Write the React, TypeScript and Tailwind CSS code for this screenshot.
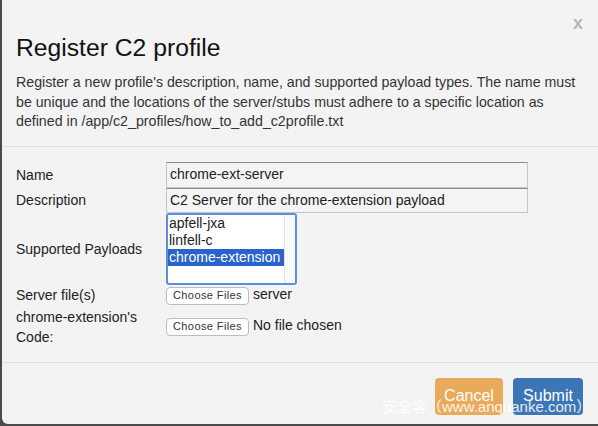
import React from "react";

export default function App() {
  const font = { fontFamily: '"Liberation Sans", Arial, "Noto Sans CJK SC", sans-serif' };
  return (
    <div className="relative w-[598px] h-[426px] bg-[#4a4a4a] overflow-hidden" style={font}>
      <div className="ml-[2px] h-[424px] bg-[#f3f3f3] rounded-bl-[6px] flex flex-col text-[#222]">
        {/* header */}
        <div className="pt-[14px] pl-[14px] pr-[15px] pb-[14px] border-b border-[#dedede]">
          <div className="flex justify-end h-[22px]">
            <span className="text-[18px] leading-[18px] font-bold text-[#b8b8b8]">x</span>
          </div>
          <h1 className="text-[24.7px] leading-[24px] text-[#111]">Register C2 profile</h1>
          <p className="mt-[13px] text-[14.2px] leading-[19.5px] text-[#333] whitespace-nowrap">
            Register a new profile's description, name, and supported payload types. The name must
            <br />
            be unique and the locations of the server/stubs must adhere to a specific location as
            <br />
            defined in /app/c2_profiles/how_to_add_c2profile.txt
          </p>
        </div>
        {/* body */}
        <div className="pt-[15px] pb-[15px] pl-[14px] border-b border-[#dedede] flex flex-col text-[14px]">
          <div className="flex items-center h-[26px]">
            <div className="w-[150px] pt-[1px]">Name</div>
            <div className="w-[362px] h-[26px] border border-[#c6c6c6] border-t-[#8c8c8c] bg-[#f4f4f4] pl-[3px] flex items-center">chrome-ext-server</div>
          </div>
          <div className="flex items-center h-[25px]">
            <div className="w-[150px]">Description</div>
            <div className="w-[362px] h-[25px] border border-[#c6c6c6] border-t-[#8c8c8c] bg-[#f4f4f4] pl-[3px] flex items-center">C2 Server for the chrome-extension payload</div>
          </div>
          <div className="flex items-center">
            <div className="w-[150px] pt-[2px]">Supported Payloads</div>
            <div className="w-[131px] h-[72px] border-2 border-[#5a8ee0] rounded-[3px] bg-white flex">
              <div className="flex-1 flex flex-col leading-[17px] text-[14px] whitespace-nowrap">
                <div className="pl-[1px] h-[17px]">apfell-jxa</div>
                <div className="pl-[1px] h-[17px]">linfell-c</div>
                <div className="pl-[1px] h-[17px] bg-[#2b63cc] text-white">chrome-extension</div>
              </div>
              <div className="w-[11px] border-l border-[#e2e2e2] bg-[#fafafa]"></div>
            </div>
          </div>
          <div className="flex items-center h-[22px]">
            <div className="w-[150px]">Server file(s)</div>
            <button className="w-[83px] h-[18px] rounded-[4px] border border-[#bdbdbd] bg-white text-[11px] text-[#333] tracking-[0.4px] leading-none">Choose Files</button>
            <span className="ml-[4px] -mt-[2px]">server</span>
          </div>
          <div className="flex items-center">
            <div className="w-[150px] pr-[14px] leading-[20px]">chrome-extension's Code:</div>
            <button className="w-[83px] h-[18px] rounded-[4px] border border-[#bdbdbd] bg-white text-[11px] text-[#333] tracking-[0.4px] leading-none">Choose Files</button>
            <span className="ml-[4px] -mt-[2px]">No file chosen</span>
          </div>
        </div>
        {/* footer */}
        <div className="flex justify-end gap-[10px] pt-[15px] pr-[15px]">
          <button className="w-[68px] h-[37px] rounded-[4px] bg-[#eaaa5b] text-white text-[16px]">Cancel</button>
          <button className="w-[70px] h-[37px] rounded-[4px] bg-[#3c76b6] text-white text-[16px]">Submit</button>
        </div>
      </div>
      <div className="absolute left-[382px] top-[397px] text-[15px] leading-[20px] text-white/85 whitespace-nowrap">安全客（www.anquanke.com）</div>
    </div>
  );
}
